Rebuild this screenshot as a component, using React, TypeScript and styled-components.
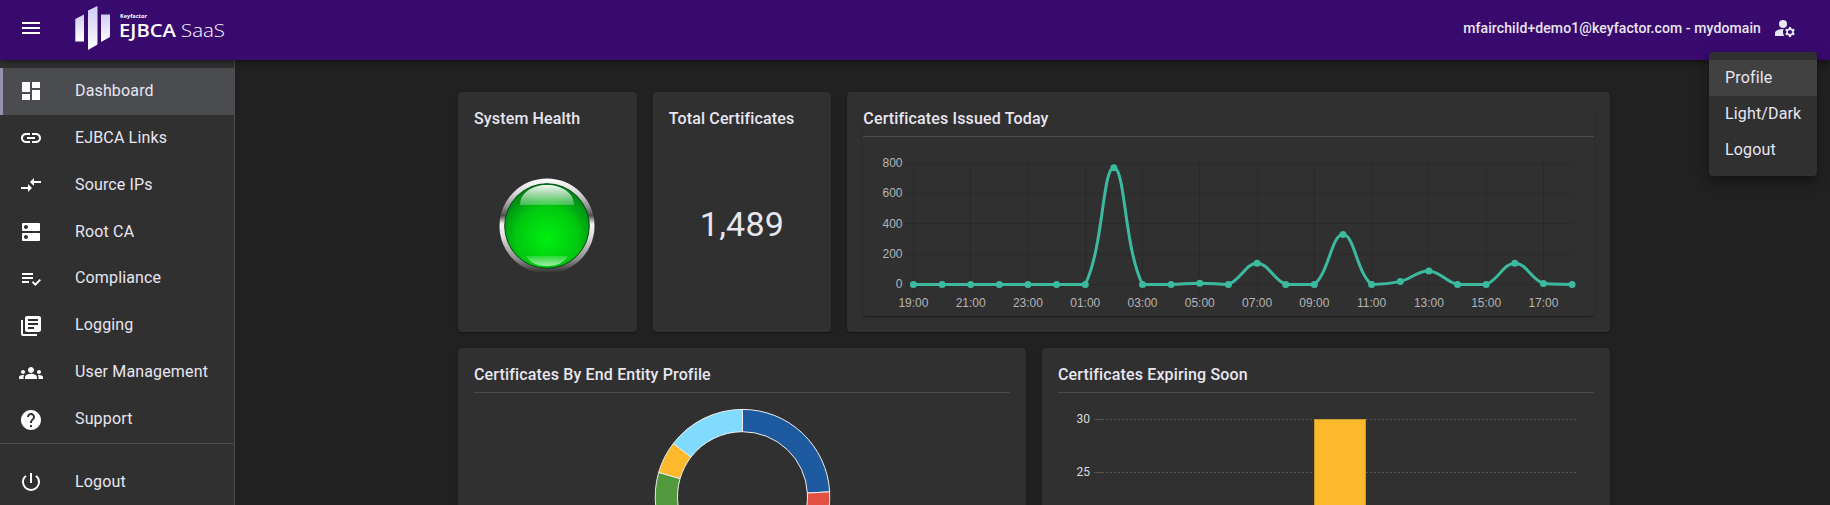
import React from "react";
import styled, { createGlobalStyle } from "styled-components";
import {
  MdMenu,
  MdDashboard,
  MdLink,
  MdCompareArrows,
  MdDns,
  MdPlaylistAddCheck,
  MdLibraryBooks,
  MdGroups,
  MdHelp,
  MdPowerSettingsNew,
  MdManageAccounts,
} from "react-icons/md";

const GlobalStyle = createGlobalStyle`
  * { box-sizing: border-box; }
  body {
    margin: 0;
    background: #212121;
    color: #e8e6f0;
    font-family: Roboto, "Liberation Sans", sans-serif;
    font-size: 16px;
    letter-spacing: 0.15px;
    overflow: hidden;
  }
`;

const Page = styled.div`
  display: flex;
  flex-direction: column;
  height: 505px;
  overflow: hidden;
`;

const Header = styled.header`
  position: relative;
  z-index: 2;
  display: flex;
  align-items: center;
  flex: none;
  height: 60px;
  padding: 0 33px 4px 19px;
  background: #380a6e;
  box-shadow: 0 2px 4px -1px rgba(0, 0, 0, 0.2), 0 4px 5px rgba(0, 0, 0, 0.14),
    0 1px 10px rgba(0, 0, 0, 0.12);
`;

const IconSlot = styled.span`
  display: flex;
  width: 24px;
  height: 24px;
  font-size: 24px;
  color: #fff;
`;

const AccountIcon = styled(IconSlot)`
  color: #e8e6f0;
`;

const LogoSvg = styled.svg`
  margin-left: 31px;
  width: 152px;
  height: 46px;
`;

const Account = styled.div`
  position: relative;
  display: flex;
  align-items: center;
  gap: 12px;
  margin-left: auto;
  font-size: 14px;
  font-weight: 500;
  letter-spacing: 0.1px;
`;

const Menu = styled.div`
  position: absolute;
  top: 36px;
  right: -20px;
  width: 108px;
  padding: 8px 0;
  border-radius: 4px;
  background: #303030;
  font-weight: 400;
  box-shadow: 0 5px 5px -3px rgba(0, 0, 0, 0.2), 0 8px 10px 1px rgba(0, 0, 0, 0.14),
    0 3px 14px 2px rgba(0, 0, 0, 0.12);
`;

const MenuItem = styled.div<{ $active?: boolean }>`
  height: 36px;
  padding: 0 16px;
  line-height: 36px;
  font-size: 16px;
  letter-spacing: 0.15px;
  background: ${(p) => (p.$active ? "#414141" : "transparent")};
`;

const Body = styled.div`
  display: flex;
  flex: 1;
  min-height: 0;
`;

const Sidebar = styled.nav`
  flex: none;
  width: 235px;
  padding-top: 8px;
  background: #303030;
  border-right: 1px solid #4b4b4b;
`;

const NavItem = styled.div<{ $active?: boolean }>`
  display: flex;
  align-items: center;
  gap: 32px;
  height: 46.875px;
  padding-left: ${(p) => (p.$active ? 16 : 19)}px;
  border-left: ${(p) => (p.$active ? "3px solid #9591ae" : "none")};
  background: ${(p) => (p.$active ? "#4b4c50" : "transparent")};
`;

const NavLabel = styled.span`
  padding-bottom: 2px;
`;

const NavDivider = styled.hr`
  margin: 0 0 15px;
  border: 0;
  border-top: 1px solid #4b4b4b;
`;

const Main = styled.main`
  flex: 1;
  display: flex;
  justify-content: center;
  padding: 32px 0 0 3px;
`;

const Grid = styled.div`
  display: grid;
  grid-template-columns: repeat(12, minmax(0, 1fr));
  grid-template-rows: 240px 400px;
  gap: 16px;
  width: 1152px;
`;

const Card = styled.section<{ $span: number }>`
  grid-column: span ${(p) => p.$span};
  display: flex;
  flex-direction: column;
  padding: 16px;
  border-radius: 4px;
  background: #303030;
  box-shadow: 0 2px 1px -1px rgba(0, 0, 0, 0.2), 0 1px 1px rgba(0, 0, 0, 0.14),
    0 1px 3px rgba(0, 0, 0, 0.12);
`;

const InnerPanel = styled.div`
  flex: 1;
  border-radius: 4px;
  box-shadow: 0 2px 1px -1px rgba(0, 0, 0, 0.2), 0 1px 1px rgba(0, 0, 0, 0.14),
    0 1px 3px rgba(0, 0, 0, 0.12);
  background: #303030;
`;

const CardTitle = styled.h2<{ $ruled?: boolean }>`
  flex: none;
  margin: 0;
  height: 29px;
  line-height: 21px;
  font-size: 16px;
  font-weight: 500;
  letter-spacing: 0.15px;
  border-bottom: ${(p) => (p.$ruled ? "1px solid #4b4b4b" : "none")};
`;

const CardCenter = styled.div`
  flex: 1;
  display: flex;
  align-items: center;
  justify-content: center;
  padding-bottom: 1px;
`;

const BigNumber = styled.div`
  font-size: 34px;
  line-height: 42px;
  letter-spacing: 0.25px;
  padding-bottom: 4px;
`;

const ChartSvg = styled.svg`
  display: block;
  font-family: Roboto, "Liberation Sans", sans-serif;
  letter-spacing: 0;
`;

const LineChartSvg = styled(ChartSvg)`
  font-family: "Liberation Sans", Arial, sans-serif;
`;

const nav = [
  { label: "Dashboard", Icon: MdDashboard },
  { label: "EJBCA Links", Icon: MdLink },
  { label: "Source IPs", Icon: MdCompareArrows },
  { label: "Root CA", Icon: MdDns },
  { label: "Compliance", Icon: MdPlaylistAddCheck },
  { label: "Logging", Icon: MdLibraryBooks },
  { label: "User Management", Icon: MdGroups },
  { label: "Support", Icon: MdHelp },
];

function Logo() {
  return (
    <LogoSvg viewBox="74 5 152 46">
      <defs>
        <linearGradient id="bar" x1="0" y1="0" x2="0" y2="1">
          <stop offset="0" stopColor="#cfcdf5" />
          <stop offset="1" stopColor="#fff" />
        </linearGradient>
      </defs>
      <path d="M75.300 19l8.700-4.500v27h-8.700z" fill="url(#bar)" />
      <path d="M88 10.500l9.500-4.500v38.500l-9.500 5.500z" fill="url(#bar)" />
      <path d="M101 14.500h9v22.500l-9 5z" fill="url(#bar)" />
      <g fill="#fff" fontFamily="'Open Sans', sans-serif" letterSpacing="0">
        <text x="120" y="17.800" fontSize="5.800" fontWeight="700" textLength="27" lengthAdjust="spacingAndGlyphs">Keyfactor</text>
        <text x="119" y="37" fontSize="18.700" fontWeight="600" textLength="57" lengthAdjust="spacingAndGlyphs">EJBCA</text>
        <text x="181" y="37" fontSize="18.700" fontWeight="300" textLength="44" lengthAdjust="spacingAndGlyphs">SaaS</text>
      </g>
    </LogoSvg>
  );
}

function HealthLight() {
  return (
    <svg width="96" height="96" viewBox="0 0 96 96">
      <defs>
        <linearGradient id="ring" x1="0" y1="0" x2="0" y2="1">
          <stop offset="0" stopColor="#fff" />
          <stop offset="0.150" stopColor="#d8d8d8" />
          <stop offset="0.300" stopColor="#909090" />
          <stop offset="0.390" stopColor="#505050" />
          <stop offset="0.480" stopColor="#f4f4f4" />
          <stop offset="0.600" stopColor="#e0e0e0" />
          <stop offset="0.850" stopColor="#8c8c8c" />
          <stop offset="1" stopColor="#2c2c2c" />
        </linearGradient>
        <radialGradient id="green" cx="0.500" cy="0.640" r="0.620">
          <stop offset="0" stopColor="#00f010" />
          <stop offset="0.600" stopColor="#00c80e" />
          <stop offset="1" stopColor="#008018" />
        </radialGradient>
        <linearGradient id="gloss" x1="0" y1="0" x2="0" y2="1">
          <stop offset="0" stopColor="#fff" stopOpacity="0.950" />
          <stop offset="1" stopColor="#fff" stopOpacity="0.250" />
        </linearGradient>
        <linearGradient id="glow" x1="0" y1="0" x2="0" y2="1">
          <stop offset="0" stopColor="#fff" stopOpacity="0.150" />
          <stop offset="1" stopColor="#fff" stopOpacity="0.650" />
        </linearGradient>
      </defs>
      <circle cx="48" cy="48" r="47.500" fill="url(#ring)" />
      <circle cx="48" cy="48" r="42.300" fill="url(#green)" stroke="#064a10" />
      <path d="M21 27C21 15 33 7 48 7s27 8 27 20z" fill="url(#gloss)" />
      <path d="M27 78h42c-4 7-12 10-21 10s-17-3-21-10z" fill="url(#glow)" />
    </svg>
  );
}

const issued = [0, 0, 0, 0, 0, 0, 0, 771, 0, 0, 8, 0, 140, 0, 0, 330, 0, 20, 89, 0, 0, 140, 6, 0];
const issuedLabels = ["19:00", "21:00", "23:00", "01:00", "03:00", "05:00", "07:00", "09:00", "11:00", "13:00", "15:00", "17:00"];

const PLOT = { left: 50.4, right: 709.1, top: 26.4, bottom: 147.4 };
const STEP = (PLOT.right - PLOT.left) / (issued.length - 1);
const points = issued.map((v, i) => ({
  x: PLOT.left + i * STEP,
  y: PLOT.bottom - (v / 800) * (PLOT.bottom - PLOT.top),
}));

/* Cardinal spline with distance-weighted handles, kept inside the plot area. */
function splinePath(tension: number) {
  const clamp = (y: number) => Math.max(PLOT.top, Math.min(PLOT.bottom, y));
  const handles = points.map((p, i) => {
    const a = points[i - 1] ?? p;
    const b = points[i + 1] ?? p;
    const da = Math.hypot(p.x - a.x, p.y - a.y);
    const db = Math.hypot(b.x - p.x, b.y - p.y);
    const fa = (tension * da) / (da + db);
    const fb = (tension * db) / (da + db);
    return {
      px: p.x - fa * (b.x - a.x),
      py: clamp(p.y - fa * (b.y - a.y)),
      nx: p.x + fb * (b.x - a.x),
      ny: clamp(p.y + fb * (b.y - a.y)),
    };
  });
  return points.reduce(
    (d, p, i) =>
      i === 0
        ? `M${p.x} ${p.y}`
        : `${d}C${handles[i - 1].nx} ${handles[i - 1].ny} ${handles[i].px} ${handles[i].py} ${p.x} ${p.y}`,
    ""
  );
}

function IssuedChart() {
  return (
    <LineChartSvg width="730" height="178" viewBox="0 0 730 178" fontSize="12" fill="#b5b5b5">
      <g stroke="#292929" strokeWidth="1">
        {[0, 1, 2, 3, 4].map((i) => {
          const y = Math.floor(PLOT.top + (i * (PLOT.bottom - PLOT.top)) / 4) + 0.5;
          return <line key={i} x1={43} x2={PLOT.right} y1={y} y2={y} />;
        })}
        {issuedLabels.map((l, i) => {
          const x = Math.floor(PLOT.left + i * 2 * STEP) + 0.5;
          return <line key={l} x1={x} x2={x} y1={PLOT.top} y2={PLOT.bottom + 8} />;
        })}
      </g>
      {[800, 600, 400, 200, 0].map((v, i) => (
        <text key={v} x="39.500" y={PLOT.top + i * 30.25 + 3.6} textAnchor="end">
          {v}
        </text>
      ))}
      {issuedLabels.map((l, i) => (
        <text key={l} x={PLOT.left + i * 2 * STEP} y="170" textAnchor="middle">
          {l}
        </text>
      ))}
      <path d={splinePath(0.4)} fill="none" stroke="#3cba9f" strokeWidth="3" />
      {points.map((p) => (
        <circle key={p.x} cx={p.x} cy={p.y} r="3.500" fill="#3cba9f" />
      ))}
    </LineChartSvg>
  );
}

const slices = [
  { from: 0, to: 86.8, color: "#1e5a9f" },
  { from: 86.8, to: 190, color: "#e35044" },
  { from: 190, to: 286.2, color: "#52993d" },
  { from: 286.2, to: 307.6, color: "#fbb92b" },
  { from: 307.6, to: 360, color: "#80dbff" },
];

function slicePath(from: number, to: number, outer: number, inner: number) {
  const at = (deg: number, r: number) => {
    const t = (deg * Math.PI) / 180;
    return `${r * Math.sin(t)} ${-r * Math.cos(t)}`;
  };
  return `M${at(from, outer)}A${outer} ${outer} 0 0 1 ${at(to, outer)}L${at(to, inner)}A${inner} ${inner} 0 0 0 ${at(from, inner)}Z`;
}

function ProfileDonut() {
  return (
    <ChartSvg width="536" height="220" viewBox="0 0 536 220">
      <g transform="translate(268.500 103.700)" stroke="#eee" strokeWidth="1">
        {slices.map((s) => (
          <path key={s.color} d={slicePath(s.from, s.to, 87.3, 65)} fill={s.color} />
        ))}
      </g>
    </ChartSvg>
  );
}

function ExpiringChart() {
  return (
    <ChartSvg width="536" height="220" viewBox="0 0 536 220" fontSize="12" fill="#dcdcdc">
      {[30, 25].map((v, i) => {
        const y = 26.5 + i * 53;
        return (
          <g key={v} stroke="#545454">
            <text x="32" y={y + 3.5} textAnchor="end" stroke="none">
              {v}
            </text>
            <line x1="36" x2="44" y1={y} y2={y} />
            <line x1="44" x2="520" y1={y} y2={y} strokeDasharray="2 2" />
          </g>
        );
      })}
      <rect x="256.500" y="26.500" width="51" height="194" fill="#fbb92b" stroke="#cf9a2a" />
    </ChartSvg>
  );
}

export default function App() {
  return (
    <Page>
      <GlobalStyle />
      <Header>
        <IconSlot>
          <MdMenu />
        </IconSlot>
        <Logo />
        <Account>
          <span>mfairchild+demo1@keyfactor.com - mydomain</span>
          <AccountIcon>
            <MdManageAccounts />
          </AccountIcon>
          <Menu>
            <MenuItem $active>Profile</MenuItem>
            <MenuItem>Light/Dark</MenuItem>
            <MenuItem>Logout</MenuItem>
          </Menu>
        </Account>
      </Header>
      <Body>
        <Sidebar>
          {nav.map(({ label, Icon }, i) => (
            <NavItem key={label} $active={i === 0}>
              <IconSlot>
                <Icon />
              </IconSlot>
              <NavLabel>{label}</NavLabel>
            </NavItem>
          ))}
          <NavDivider />
          <NavItem>
            <IconSlot>
              <MdPowerSettingsNew />
            </IconSlot>
            <NavLabel>Logout</NavLabel>
          </NavItem>
        </Sidebar>
        <Main>
          <Grid>
            <Card $span={2}>
              <CardTitle>System Health</CardTitle>
              <CardCenter>
                <HealthLight />
              </CardCenter>
            </Card>
            <Card $span={2}>
              <CardTitle>Total Certificates</CardTitle>
              <CardCenter>
                <BigNumber>1,489</BigNumber>
              </CardCenter>
            </Card>
            <Card $span={8}>
              <InnerPanel>
                <CardTitle $ruled>Certificates Issued Today</CardTitle>
                <IssuedChart />
              </InnerPanel>
            </Card>
            <Card $span={6}>
              <CardTitle $ruled>Certificates By End Entity Profile</CardTitle>
              <ProfileDonut />
            </Card>
            <Card $span={6}>
              <CardTitle $ruled>Certificates Expiring Soon</CardTitle>
              <ExpiringChart />
            </Card>
          </Grid>
        </Main>
      </Body>
    </Page>
  );
}
